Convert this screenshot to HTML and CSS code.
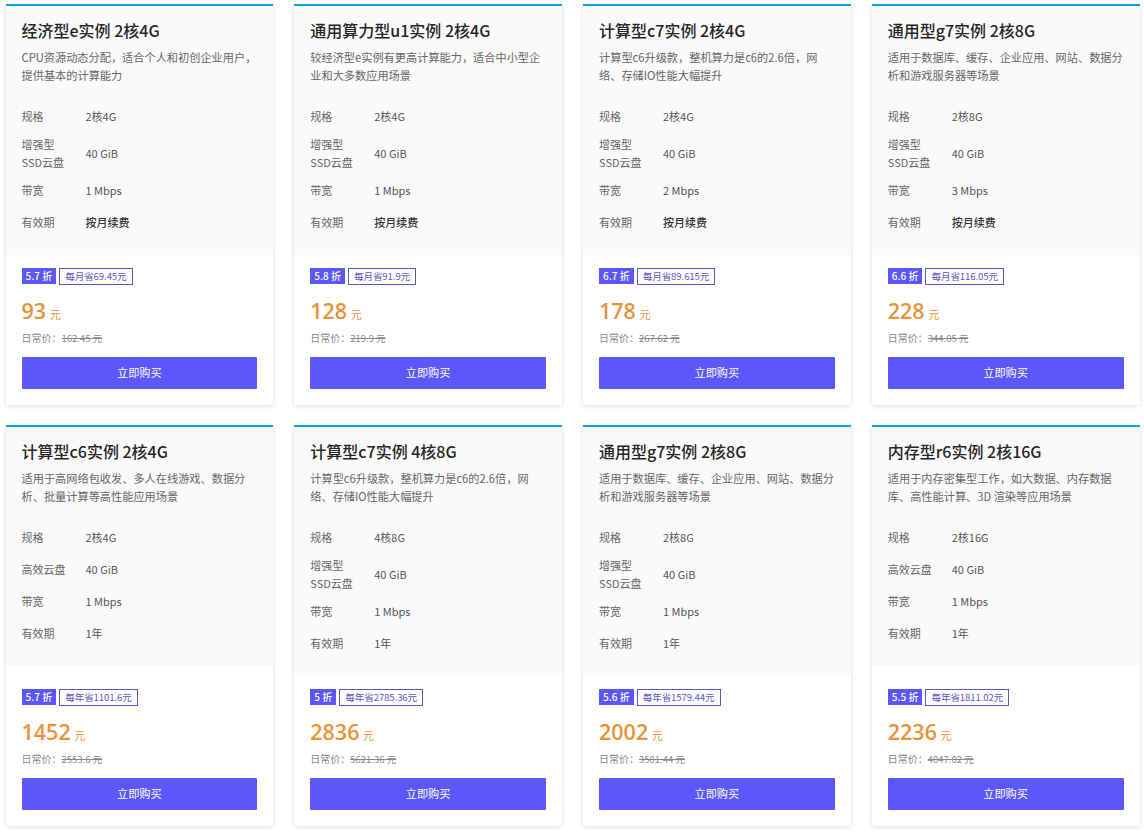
FILE: index.html
```html
<!DOCTYPE html>
<html lang="zh-CN">
<head>
<meta charset="utf-8">
<title>云服务器实例</title>
<link rel="stylesheet" href="styles.css">
</head>
<body>
<main class="grid">
<article class="card">
  <div class="top">
    <h2>经济型e实例 2核4G</h2>
    <p class="desc">CPU资源动态分配，适合个人和初创企业用户，提供基本的计算能力</p>
    <dl class="specs">
      <div class="row"><dt>规格</dt><dd>2核4G</dd></div>
      <div class="row"><dt class="wrap">增强型<br>SSD云盘</dt><dd>40 GiB</dd></div>
      <div class="row"><dt>带宽</dt><dd>1 Mbps</dd></div>
      <div class="row"><dt>有效期</dt><dd class="strong">按月续费</dd></div>
    </dl>
  </div>
  <div class="bottom">
    <div class="tags"><span class="off">5.7 折</span><span class="save">每月省69.45元</span></div>
    <div class="price"><b>93</b> <span>元</span></div>
    <div class="orig">日常价：<s>162.45 元</s></div>
    <a class="buy">立即购买</a>
  </div>
</article>
<article class="card">
  <div class="top">
    <h2>通用算力型u1实例 2核4G</h2>
    <p class="desc">较经济型e实例有更高计算能力，适合中小型企业和大多数应用场景</p>
    <dl class="specs">
      <div class="row"><dt>规格</dt><dd>2核4G</dd></div>
      <div class="row"><dt class="wrap">增强型<br>SSD云盘</dt><dd>40 GiB</dd></div>
      <div class="row"><dt>带宽</dt><dd>1 Mbps</dd></div>
      <div class="row"><dt>有效期</dt><dd class="strong">按月续费</dd></div>
    </dl>
  </div>
  <div class="bottom">
    <div class="tags"><span class="off">5.8 折</span><span class="save">每月省91.9元</span></div>
    <div class="price"><b>128</b> <span>元</span></div>
    <div class="orig">日常价：<s>219.9 元</s></div>
    <a class="buy">立即购买</a>
  </div>
</article>
<article class="card">
  <div class="top">
    <h2>计算型c7实例 2核4G</h2>
    <p class="desc">计算型c6升级款，整机算力是c6的2.6倍，网络、存储IO性能大幅提升</p>
    <dl class="specs">
      <div class="row"><dt>规格</dt><dd>2核4G</dd></div>
      <div class="row"><dt class="wrap">增强型<br>SSD云盘</dt><dd>40 GiB</dd></div>
      <div class="row"><dt>带宽</dt><dd>2 Mbps</dd></div>
      <div class="row"><dt>有效期</dt><dd class="strong">按月续费</dd></div>
    </dl>
  </div>
  <div class="bottom">
    <div class="tags"><span class="off">6.7 折</span><span class="save">每月省89.615元</span></div>
    <div class="price"><b>178</b> <span>元</span></div>
    <div class="orig">日常价：<s>267.62 元</s></div>
    <a class="buy">立即购买</a>
  </div>
</article>
<article class="card">
  <div class="top">
    <h2>通用型g7实例 2核8G</h2>
    <p class="desc">适用于数据库、缓存、企业应用、网站、数据分析和游戏服务器等场景</p>
    <dl class="specs">
      <div class="row"><dt>规格</dt><dd>2核8G</dd></div>
      <div class="row"><dt class="wrap">增强型<br>SSD云盘</dt><dd>40 GiB</dd></div>
      <div class="row"><dt>带宽</dt><dd>3 Mbps</dd></div>
      <div class="row"><dt>有效期</dt><dd class="strong">按月续费</dd></div>
    </dl>
  </div>
  <div class="bottom">
    <div class="tags"><span class="off">6.6 折</span><span class="save">每月省116.05元</span></div>
    <div class="price"><b>228</b> <span>元</span></div>
    <div class="orig">日常价：<s>344.05 元</s></div>
    <a class="buy">立即购买</a>
  </div>
</article>
<article class="card">
  <div class="top">
    <h2>计算型c6实例 2核4G</h2>
    <p class="desc">适用于高网络包收发、多人在线游戏、数据分析、批量计算等高性能应用场景</p>
    <dl class="specs">
      <div class="row"><dt>规格</dt><dd>2核4G</dd></div>
      <div class="row"><dt>高效云盘</dt><dd>40 GiB</dd></div>
      <div class="row"><dt>带宽</dt><dd>1 Mbps</dd></div>
      <div class="row"><dt>有效期</dt><dd>1年</dd></div>
    </dl>
  </div>
  <div class="bottom">
    <div class="tags"><span class="off">5.7 折</span><span class="save">每年省1101.6元</span></div>
    <div class="price"><b>1452</b> <span>元</span></div>
    <div class="orig">日常价：<s>2553.6 元</s></div>
    <a class="buy">立即购买</a>
  </div>
</article>
<article class="card">
  <div class="top">
    <h2>计算型c7实例 4核8G</h2>
    <p class="desc">计算型c6升级款，整机算力是c6的2.6倍，网络、存储IO性能大幅提升</p>
    <dl class="specs">
      <div class="row"><dt>规格</dt><dd>4核8G</dd></div>
      <div class="row"><dt class="wrap">增强型<br>SSD云盘</dt><dd>40 GiB</dd></div>
      <div class="row"><dt>带宽</dt><dd>1 Mbps</dd></div>
      <div class="row"><dt>有效期</dt><dd>1年</dd></div>
    </dl>
  </div>
  <div class="bottom">
    <div class="tags"><span class="off">5 折</span><span class="save">每年省2785.36元</span></div>
    <div class="price"><b>2836</b> <span>元</span></div>
    <div class="orig">日常价：<s>5621.36 元</s></div>
    <a class="buy">立即购买</a>
  </div>
</article>
<article class="card">
  <div class="top">
    <h2>通用型g7实例 2核8G</h2>
    <p class="desc">适用于数据库、缓存、企业应用、网站、数据分析和游戏服务器等场景</p>
    <dl class="specs">
      <div class="row"><dt>规格</dt><dd>2核8G</dd></div>
      <div class="row"><dt class="wrap">增强型<br>SSD云盘</dt><dd>40 GiB</dd></div>
      <div class="row"><dt>带宽</dt><dd>1 Mbps</dd></div>
      <div class="row"><dt>有效期</dt><dd>1年</dd></div>
    </dl>
  </div>
  <div class="bottom">
    <div class="tags"><span class="off">5.6 折</span><span class="save">每年省1579.44元</span></div>
    <div class="price"><b>2002</b> <span>元</span></div>
    <div class="orig">日常价：<s>3581.44 元</s></div>
    <a class="buy">立即购买</a>
  </div>
</article>
<article class="card">
  <div class="top">
    <h2>内存型r6实例 2核16G</h2>
    <p class="desc">适用于内存密集型工作，如大数据、内存数据库、高性能计算、3D 渲染等应用场景</p>
    <dl class="specs">
      <div class="row"><dt>规格</dt><dd>2核16G</dd></div>
      <div class="row"><dt>高效云盘</dt><dd>40 GiB</dd></div>
      <div class="row"><dt>带宽</dt><dd>1 Mbps</dd></div>
      <div class="row"><dt>有效期</dt><dd>1年</dd></div>
    </dl>
  </div>
  <div class="bottom">
    <div class="tags"><span class="off">5.5 折</span><span class="save">每年省1811.02元</span></div>
    <div class="price"><b>2236</b> <span>元</span></div>
    <div class="orig">日常价：<s>4047.02 元</s></div>
    <a class="buy">立即购买</a>
  </div>
</article>
</main>
</body>
</html>
```
FILE: styles.css
```css
* { box-sizing: border-box; }
html, body { margin: 0; padding: 0; background: #fff; }
body {
  font-family: "Noto Sans CJK SC", "Open Sans", sans-serif;
  color: #333;
  height: 833px;
  overflow: hidden;
}
.grid {
  display: grid;
  grid-template-columns: repeat(4, 1fr);
  column-gap: 21px;
  row-gap: 20px;
  padding: 4px 4.5px 0 5.5px;
}
.card {
  height: 401px;
  border-top: 2px solid #0aa5d0;
  background: #fff;
  box-shadow: 0 1px 5px rgba(0, 0, 0, .14);
  border-radius: 0 0 3px 3px;
  display: flex;
  flex-direction: column;
  justify-content: space-between;
}
.top {
  background: #fafafa;
  padding: 11px 16px 17px;
}
h2 {
  margin: 0;
  font-size: 16px;
  line-height: 26px;
  font-weight: 500;
  color: #262626;
}
.desc {
  margin: 5px 0 14px;
  font-size: 11.2px;
  line-height: 18px;
  color: #666;
  height: 36px;
}
.specs { margin: 0; padding-top: 2px; }
.row {
  display: flex;
  align-items: center;
  min-height: 32px;
  font-size: 11px;
  line-height: 18px;
  padding: 3px 0;
}
dt { width: 64px; color: #666; flex: none; }
dd { margin: 0; color: #555; }
dd.strong { font-weight: 500; color: #333; }
.bottom { padding: 0 16px 16px; }
.tags { display: flex; align-items: flex-start; gap: 3px; height: 18px; }
.off {
  background: #5b57fa;
  color: #fff;
  font-size: 10px;
  font-weight: 500;
  line-height: 16px;
  height: 16px;
  padding: 0 4px;
}
.save {
  border: 1px solid #5a58c0;
  color: #5a58c0;
  font-size: 9.6px;
  letter-spacing: -.1px;
  line-height: 15px;
  height: 17px;
  padding: 0 5px;
}
.price { margin-top: 10px; line-height: 30px; color: #e8923a; height: 30px; }
.price b { font-family: "Open Sans", "Noto Sans CJK SC", sans-serif; font-size: 21.5px; font-weight: 600; }
.price span { font-size: 11.2px; }
.orig { margin-top: 3px; font-size: 10px; line-height: 18px; color: #888; }
.orig s { font-size: 9.5px; }
.buy {
  display: block;
  margin-top: 10px;
  height: 32px;
  line-height: 31px;
  text-align: center;
  font-size: 11.2px;
  color: #fff;
  background: #5b57fa;
  border-radius: 1px;
}
```
